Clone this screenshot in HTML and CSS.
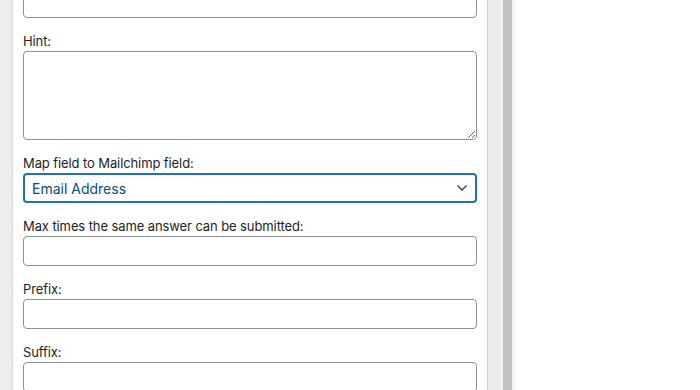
FILE: index.html
```html
<!DOCTYPE html>
<html>

<head>
  <meta charset="utf-8">
  <title>Field settings</title>
  <link rel="stylesheet" href="styles.css">
</head>

<body>
  <div class="frame">
    <div class="gutter"></div>

    <div class="panel">
      <div class="fields">
        <div class="field first">
          <input type="text" class="box">
        </div>

        <div class="field">
          <label for="hint">Hint:</label>
          <textarea id="hint" class="box area"></textarea>
        </div>

        <div class="field">
          <label for="map">Map field to Mailchimp field:</label>
          <div class="select">
            <span>Email Address</span>
            <svg width="12" height="8" viewBox="0 0 12 8">
              <path d="M1.5 1.5 L6 6 L10.5 1.5" fill="none" stroke="#50575e" stroke-width="1.6" />
            </svg>
          </div>
        </div>

        <div class="field">
          <label for="max">Max times the same answer can be submitted:</label>
          <input type="text" id="max" class="box">
        </div>

        <div class="field">
          <label for="prefix">Prefix:</label>
          <input type="text" id="prefix" class="box">
        </div>

        <div class="field">
          <label for="suffix">Suffix:</label>
          <input type="text" id="suffix" class="box">
        </div>
      </div>
    </div>

    <div class="side"></div>
    <div class="scroll">
      <div class="thumb"></div>
    </div>
    <div class="rest"></div>
  </div>
</body>

</html>
```

FILE: styles.css
```css
html,
body {
  margin: 0;
  height: 100%;
  overflow: hidden;
  background: #fff;
  font-family: Inter, "Noto Sans", sans-serif;
  font-size: 13px;
  color: #1e1e1e;
}

.frame {
  display: flex;
  height: 390px;
}

.gutter {
  width: 12px;
  background: #ededed;
  border-right: 1px solid #d9d9d9;
}

/*///////////////////////////////////////////////////////////////////////////*/
.panel {
  width: 454px;
  padding: 0 10px;
  background: #fff;
  border-right: 1px solid #cfcfcf;
  overflow: hidden;
}

.fields {
  margin-top: -12px;
}

.field {
  margin-top: 15px;
}

.field.first {
  margin-top: 0;
}

.field label {
  display: block;
  line-height: 16px;
  margin-bottom: 2px;
  letter-spacing: -0.1px;
}

.box {
  display: block;
  box-sizing: border-box;
  width: 100%;
  height: 30px;
  margin: 0;
  border: 1px solid #8c8f94;
  border-radius: 4px;
  background: #fff;
  font-family: inherit;
  font-size: 14px;
}

.area {
  height: 89px;
}

.select {
  display: flex;
  align-items: center;
  justify-content: space-between;
  box-sizing: border-box;
  height: 30px;
  padding: 0 7px 0 7px;
  border: 2px solid #2271b1;
  border-radius: 4px;
  font-size: 14px;
  color: #0a4b78;
}

/*///////////////////////////////////////////////////////////////////////////*/
.side {
  width: 12px;
  background: #ebebeb;
}

.scroll {
  width: 15px;
  box-sizing: border-box;
  padding: 0 3px;
  background: #f2f2f2;
}

.thumb {
  height: 100%;
  background: #c1c1c1;
}

.rest {
  flex: 1;
  background: #fff;
}
```
